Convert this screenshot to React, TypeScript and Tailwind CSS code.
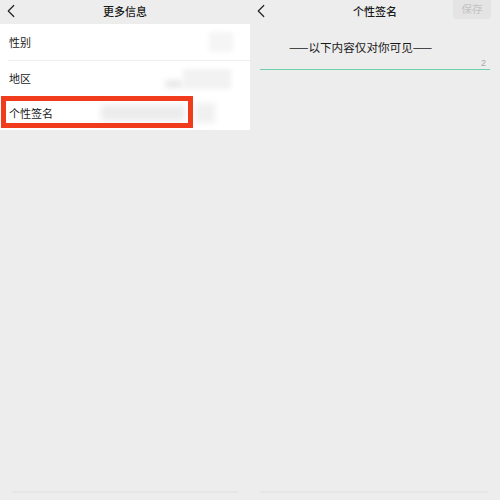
import { ChevronLeft } from "lucide-react";

const cjk = "font-['Noto_Sans_CJK_SC','Noto_Sans',sans-serif]";

function Header({ title, right }: { title: string; right?: React.ReactNode }) {
  return (
    <div className="grid h-[24px] grid-cols-[48px_1fr_48px] items-center pb-[4px]">
      <ChevronLeft className="h-[22px] w-[22px] text-[#222]" strokeWidth={1.3} />
      <div className="text-center text-[11px] font-medium leading-none text-[#1a1a1a]">{title}</div>
      <div className="-mb-[4px] flex h-[24px] justify-end self-start">{right}</div>
    </div>
  );
}

export default function App() {
  return (
    <div className={`flex h-[500px] w-[500px] bg-[#ededed] ${cjk}`}>
      {/* Left: 更多信息 */}
      <div className="flex w-[250px] flex-col">
        <Header title="更多信息" />
        <div className="bg-white text-[11px] leading-none text-[#1a1a1a]">
          <div className="flex h-[36px] items-center justify-between px-[9px]">
            <span>性别</span>
            <div className="mr-[8px] h-[20px] w-[24px] bg-[#f5f5f5] blur-[2px]" />
          </div>
          <div className="ml-[8px] h-px bg-[#efefef]" />
          <div className="flex h-[35px] items-center justify-between px-[9px]">
            <span>地区</span>
            <div className="mr-[10px] flex items-end">
              <div className="mb-[2px] h-[6px] w-[18px] rounded-full bg-[#e0e0e0] blur-[3px]" />
              <div className="h-[20px] w-[48px] bg-[#f2f2f2] blur-[2px]" />
            </div>
          </div>
          <div className="relative flex h-[34px] items-center px-[9px]">
            <span>个性签名</span>
            <div className="ml-[48px] h-[16px] w-[84px] bg-[#ececec] blur-[3px]" />
            <div className="ml-[10px] h-[20px] w-[20px] bg-[#f0f0f0] blur-[3px]" />
            <div className="absolute left-[1px] top-0 h-[32px] w-[192px] border-[5px] border-[#f03c1c]" />
          </div>
        </div>
        <div className="mt-auto mb-[7px] ml-[12px] h-[2px] w-[226px] bg-[#e6e6e6]" />
      </div>

      {/* Right: 个性签名 */}
      <div className="flex w-[250px] flex-col">
        <Header
          title="个性签名"
          right={
            <div className="mr-[9px] flex h-[19px] w-[38px] items-center justify-center rounded-b-[3px] bg-[#e4e4e4] text-[10.5px] leading-none text-[#c2c2c2]">
              保存
            </div>
          }
        />
        <div className="mt-[16px] pl-[39px] text-[11.6px] leading-[14px] text-[#1a1a1a]">——以下内容仅对你可见——</div>
        <div className="mx-[10px] mt-[4px] flex justify-end pr-[4px] font-['Liberation_Sans',sans-serif] text-[9px] leading-[10px] text-[#a8a8a8]">
          2
        </div>
        <div className="mx-[10px] mt-[1px] h-px bg-[#6fcfa8]" />
        <div className="mt-auto mb-[7px] ml-[10px] h-[2px] w-[228px] bg-[#e6e6e6]" />
      </div>
    </div>
  );
}
